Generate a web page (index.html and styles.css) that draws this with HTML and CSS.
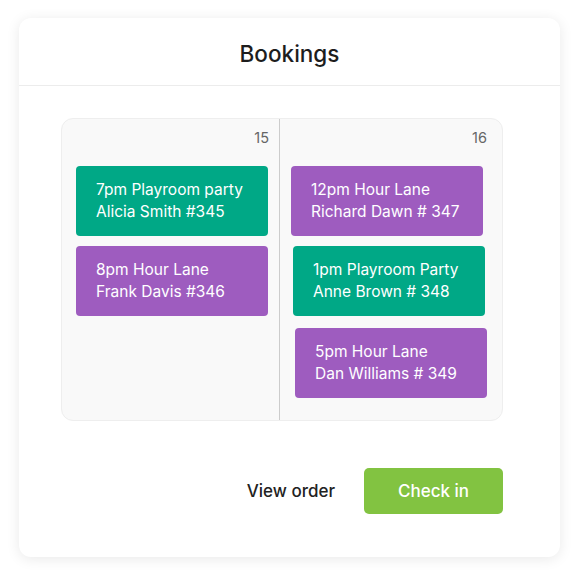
FILE: index.html
```html
<!DOCTYPE html>
<html lang="en">
<head>
    <meta charset="UTF-8">
    <title>Bookings</title>
    <link rel="stylesheet" href="styles.css">
</head>
<body>
    <div class="card">
        <div class="card-header">
            <h1>Bookings</h1>
        </div>

        <div class="calendar">
            <div class="day">
                <div class="day-num">15</div>
                <div class="event party">
                    <p>7pm Playroom party</p>
                    <p>Alicia Smith #345</p>
                </div>
                <div class="event lane">
                    <p>8pm Hour Lane</p>
                    <p>Frank Davis #346</p>
                </div>
            </div>
            <div class="day">
                <div class="day-num">16</div>
                <div class="event lane">
                    <p>12pm Hour Lane</p>
                    <p>Richard Dawn # 347</p>
                </div>
                <div class="event party shift-1">
                    <p>1pm Playroom Party</p>
                    <p>Anne Brown # 348</p>
                </div>
                <div class="event lane shift-2">
                    <p>5pm Hour Lane</p>
                    <p>Dan Williams # 349</p>
                </div>
            </div>
        </div>

        <div class="actions">
            <button class="link-btn">View order</button>
            <button class="primary-btn">Check in</button>
        </div>
    </div>
</body>
</html>
```

FILE: styles.css
```css
body {
    margin: 0;
    padding: 18px 20px 23px 19px;
    background-color: #fff;
    font-family: Inter, "Open Sans", sans-serif;
    color: #222;
}
.card {
    width: 541px;
    height: 539px;
    box-sizing: border-box;
    background-color: white;
    border-radius: 12px;
    box-shadow: 0 2px 14px rgba(0,0,0,0.09);
}
.card-header {
    height: 68px;
    box-sizing: border-box;
    padding-top: 3px;
    border-bottom: 1px solid #ececec;
    display: flex;
    align-items: center;
    justify-content: center;
}
.card-header h1 {
    margin: 0;
    font-size: 22.5px;
    font-weight: 500;
    color: #1d1d1d;
}
.calendar {
    margin: 32px 57px 0 42px;
    height: 303px;
    display: grid;
    grid-template-columns: 217px 1fr;
    background-color: #f9f9f9;
    border: 1px solid #eee;
    border-radius: 12px;
    box-sizing: border-box;
}
.day {
    padding: 10px 10px 0 14px;
}
.day + .day {
    border-left: 1px solid #ccc;
    padding-left: 11px;
    padding-right: 15px;
}
.day-num {
    text-align: right;
    font-size: 14.5px;
    color: #666;
    height: 20px;
    margin-bottom: 17px;
}
.event {
    width: 192px;
    height: 70px;
    box-sizing: border-box;
    padding: 13px 20px;
    border-radius: 4px;
    color: white;
    font-size: 15.5px;
    line-height: 22px;
    margin-bottom: 10px;
}
.event p {
    margin: 0;
    white-space: nowrap;
}
.party {
    background-color: #00a886;
}
.lane {
    background-color: #9e5cbf;
}
.shift-1 {
    margin-left: 2px;
}
.shift-2 {
    margin-left: 4px;
    margin-top: 12px;
}
.actions {
    margin: 47px 57px 0 0;
    display: flex;
    justify-content: flex-end;
    align-items: center;
    gap: 29px;
}
button {
    font-family: inherit;
    font-size: 17px;
    border: none;
    cursor: pointer;
}
.link-btn {
    background: none;
    color: #222;
    padding: 0;
    font-weight: 500;
}
.primary-btn {
    width: 139px;
    height: 46px;
    background-color: #82c341;
    color: white;
    border-radius: 5px;
    font-weight: 500;
}
```
